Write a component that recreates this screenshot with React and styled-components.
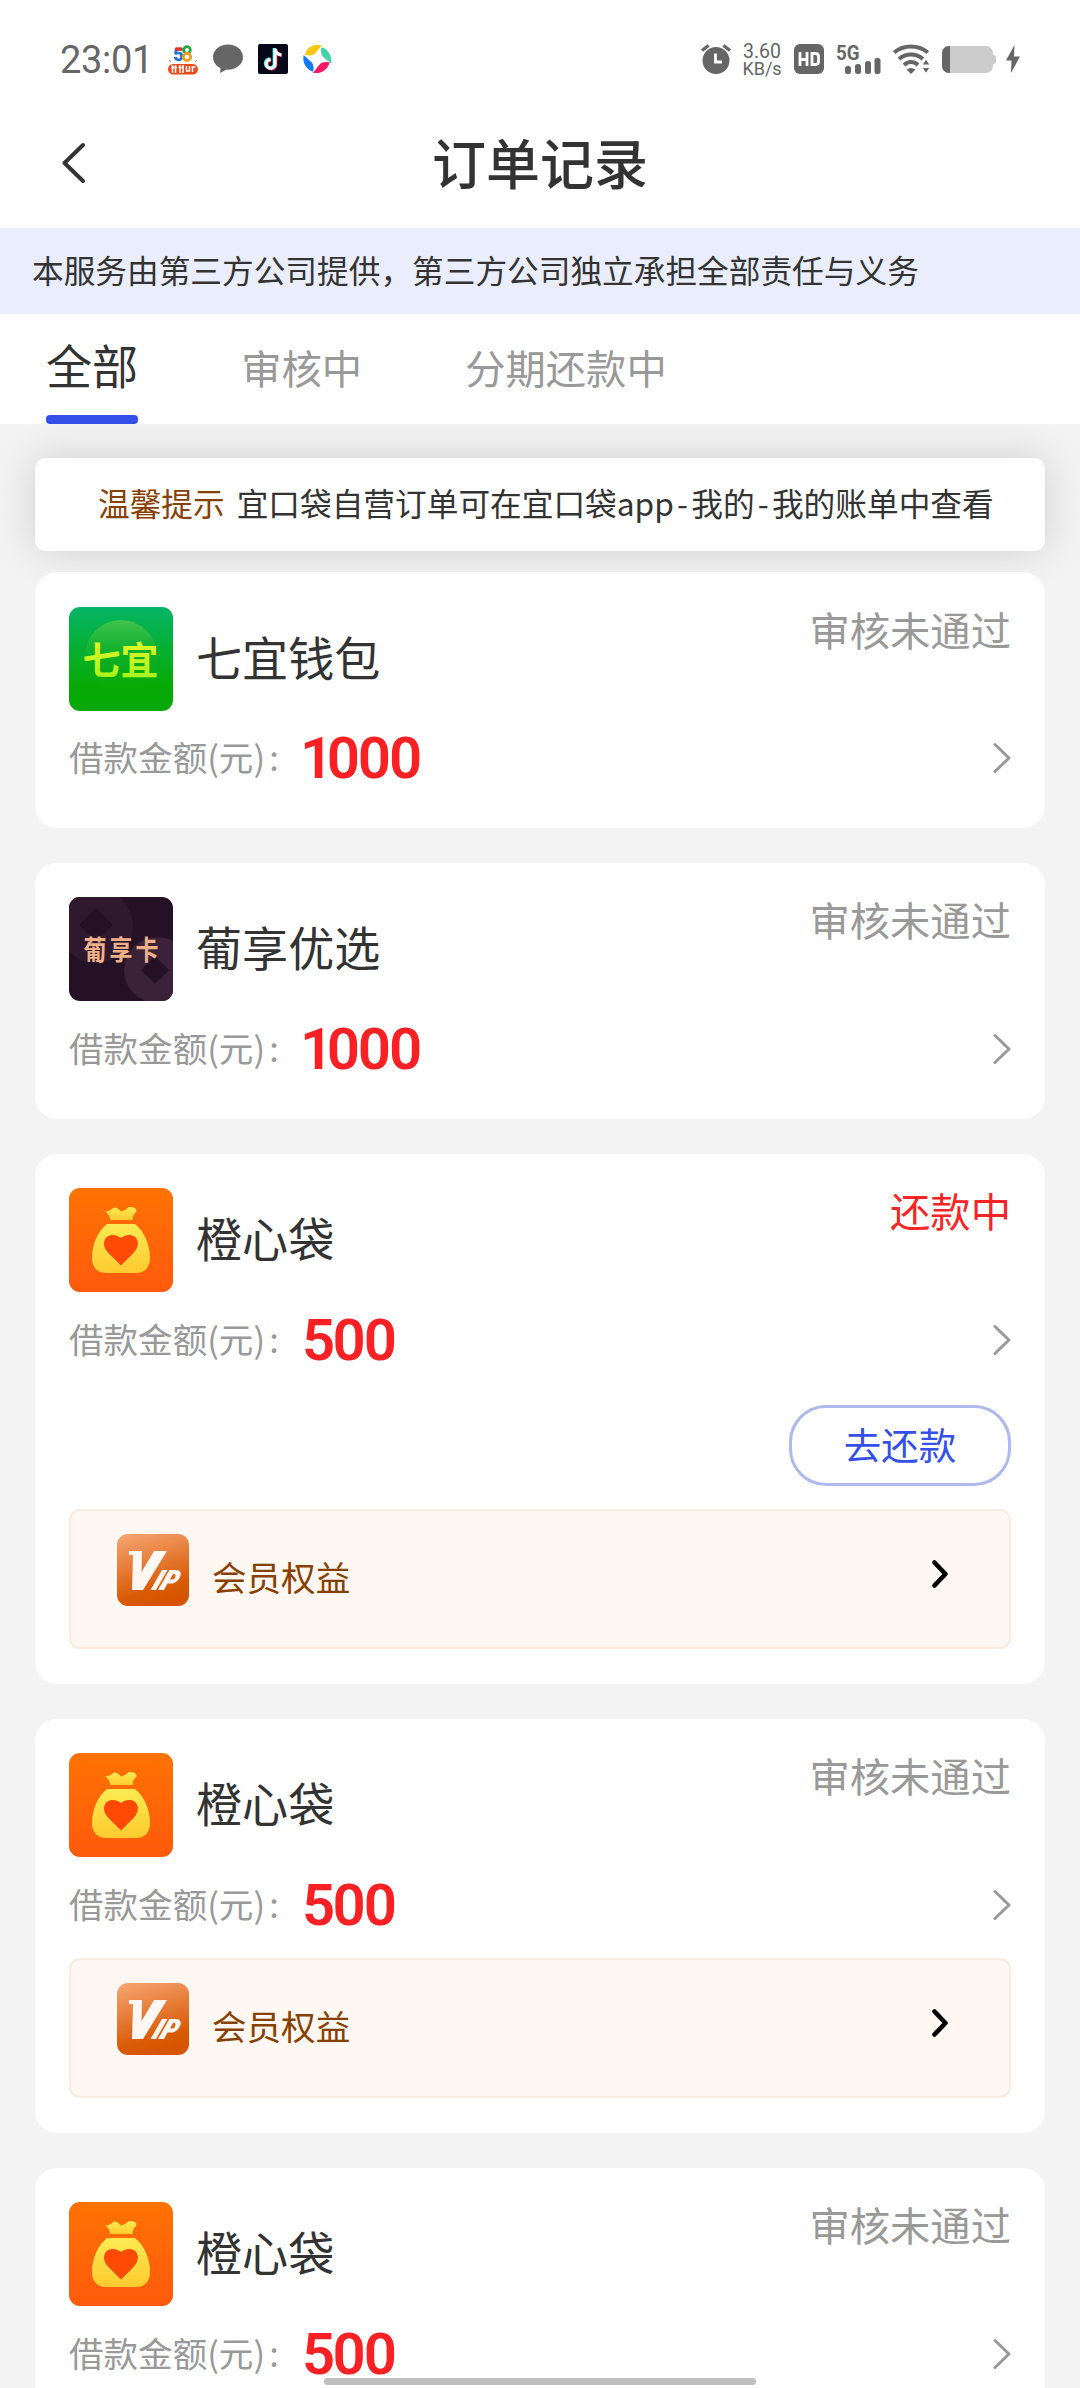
import React from 'react';
import styled, { createGlobalStyle } from 'styled-components';

const GlobalStyle = createGlobalStyle`
  * {
    box-sizing: border-box;
  }

  body {
    margin: 0;
    background: #f3f3f3;
    font-family: 'Noto Sans CJK SC', sans-serif;
    color: #333;
  }
`;

const Page = styled.div`
  position: relative;
  width: 1080px;
  height: 2388px;
  overflow: hidden;
  background: #f3f3f3;
`;

const StatusBar = styled.div`
  display: flex;
  justify-content: space-between;
  align-items: center;
  height: 118px;
  padding: 0 60px;
  background: #fff;
  color: #666;

  svg {
    display: block;
    flex: none;
    overflow: visible;
  }
`;

const StatusGroup = styled.div`
  display: flex;
  align-items: center;
  gap: ${props => props.$gap}px;
`;

const Clock = styled.div`
  width: 93px;
  padding-top: 2px;
  font: 400 38px/44px Roboto, sans-serif;
  letter-spacing: -0.3px;
  white-space: nowrap;
`;

const Speed = styled.div`
  display: flex;
  flex-direction: column;
  align-items: center;
  width: 38px;
  margin: 2px 1px 0 0;
  font: 400 18px/17.5px Roboto, sans-serif;

  span:first-child {
    font-size: 19.5px;
  }
`;

const NavBar = styled.div`
  display: grid;
  grid-template-columns: 1fr auto 1fr;
  align-items: center;
  height: 110px;
  padding: 0 56px 20px;
  background: #fff;
`;

const Title = styled.h1`
  margin: 0;
  padding-bottom: 2px;
  font-size: 54px;
  font-weight: 500;
  line-height: 80px;
`;

const Disclaimer = styled.div`
  height: 86px;
  padding-left: 32px;
  background: #eaedfc;
  font-size: 31.68px;
  line-height: 83px;
  white-space: nowrap;
`;

const Tabs = styled.div`
  display: flex;
  gap: 103px;
  height: 110px;
  padding-left: 46px;
  background: #fff;
`;

const Tab = styled.div`
  display: flex;
  flex-direction: column;
  justify-content: space-between;
  font-size: ${props => (props.$active ? 46.08 : 40.32)}px;
  line-height: ${props => (props.$active ? 101 : 106)}px;
  color: ${props => (props.$active ? '#333' : '#999')};

  &::after {
    content: '';
    display: ${props => (props.$active ? 'block' : 'none')};
    height: 9px;
    margin-top: -7px;
    border-radius: 4px;
    background: #3450e8;
  }
`;

const Tip = styled.div`
  display: flex;
  gap: 12px;
  height: 93px;
  margin: 34px 35px 21px;
  padding-left: 63px;
  border-radius: 11px;
  background: #fff;
  box-shadow: 0 0 42px rgba(0, 0, 0, 0.15);
  font-size: 31.68px;
  line-height: 88px;
  white-space: nowrap;
`;

const TipLabel = styled.span`
  color: #864000;
`;

const Dash = styled.span`
  padding: 0 3.2px;
`;

const List = styled.div`
  position: relative;
  display: flex;
  flex-direction: column;
  gap: 34.7px;
  padding: 0 35px;
`;

const Card = styled.div`
  padding: 34.56px 34px;
  border-radius: 22px;
  background: #fff;
`;

const CardHead = styled.div`
  display: flex;
  height: 104px;
`;

const Name = styled.div`
  flex: 1;
  margin-left: 23px;
  font-size: 46.08px;
  line-height: 98px;
`;

const Status = styled.div`
  font-size: 40.32px;
  line-height: 44px;
  color: ${props => (props.$active ? '#f92424' : '#999')};
`;

const AmountRow = styled.div`
  display: flex;
  align-items: center;
  height: 71px;
  margin-top: 12px;
`;

const AmountLabel = styled.div`
  width: 233px;
  padding-bottom: 4px;
  font-size: 34.56px;
  line-height: 62px;
  word-spacing: -3.5px;
  color: #999;
  white-space: nowrap;
`;

const Amount = styled.div`
  flex: 1;
  font: 600 58px/66px Roboto, sans-serif;
  font-feature-settings: 'pnum';
  letter-spacing: -3.1px;
  color: #fb2024;
`;

const RepayButton = styled.button`
  display: block;
  width: 222px;
  height: 81px;
  margin: 30px 0 23.2px auto;
  padding: 0 0 3px;
  border: 3px solid #afb9ee;
  border-radius: 37px;
  background: #fff;
  font-family: inherit;
  font-size: 37.44px;
  line-height: 72px;
  color: #3450e8;
`;

const VipBox = styled.div`
  display: flex;
  align-items: flex-start;
  height: 140px;
  margin-top: 18.2px;
  padding: 23px 60px 0 46px;
  border: 2px solid #f8ebe0;
  border-radius: 11px;
  background: #fff7f1;

  svg:last-child {
    margin-top: 25px;
  }
`;

const VipText = styled.div`
  flex: 1;
  margin-left: 23px;
  font-size: 34.56px;
  line-height: 84px;
  color: #864000;
`;

const HomeIndicator = styled.div`
  position: absolute;
  left: 324px;
  bottom: 3px;
  width: 432px;
  height: 7px;
  border-radius: 4px;
  background: #bfbfbf;
`;

const SvgText = styled.text`
  font-family: ${props => props.$font || "'Noto Sans CJK SC'"}, sans-serif;
`;

const City58Icon = () => (
  <svg width="30" height="31" viewBox="0 0 30 31">
    <SvgText $font="Roboto" x="5" y="17" fontSize="19" fontWeight="900" fill="#1976d2">5</SvgText>
    <path d="M7.500 5h6.500" stroke="#e8332a" strokeWidth="3.4" />
    <circle cx="19" cy="6" r="3.3" fill="none" stroke="#22a838" strokeWidth="2.8" />
    <circle cx="19" cy="13" r="3.7" fill="none" stroke="#f79a1c" strokeWidth="2.8" />
    <path d="M1 16l2 2M29 16l-2 2" stroke="#999" strokeWidth="1" />
    <rect x="0" y="20" width="30" height="10.500" rx="5.2" fill="#ea4a1b" />
    <path d="M3 23.500h6M4.500 21v8M7.500 21v8M10.500 23.500h5.500M12 21v8M15 21v8M18.500 22v5h3v-5M24.500 23v5M23.500 23h4" stroke="#fff" strokeWidth="1.5" fill="none" />
  </svg>
);

const BubbleIcon = () => (
  <svg width="30" height="30" viewBox="0 0 30 30">
    <path d="M15 0.5C6.700.5 0 6 0 13.200c0 4.700 3 8.600 7.500 10.900L7.200 29l6.300-3.400c9 .6 16.500-5 16.500-12.400C30 6 23.300.5 15 .5z" fill="#666" />
  </svg>
);

const TikTokIcon = () => (
  <svg width="30" height="30" viewBox="0 0 30 30">
    <rect width="30" height="30" rx="2" fill="#07071a" />
    <g fill="none" strokeWidth="3.2">
      <path d="M16.200 4v15.500a4.400 4.400 0 1 1-4.400-4.600M16.200 4c.3 4 3 6 6.300 6.300" stroke="#25f0ea" />
      <path d="M17.800 5.200v15.500a4.400 4.400 0 1 1-4.400-4.600M17.800 5.200c.3 4 3 6 6.300 6.300" stroke="#fb2c56" />
      <path d="M17 4.600v15.500a4.400 4.400 0 1 1-4.400-4.600M17 4.600c.3 4 3 6 6.300 6.300" stroke="#fff" />
    </g>
  </svg>
);

const PinwheelIcon = () => (
  <svg width="29" height="30" viewBox="0 0 29 30">
    <path d="M2 10.800C3.500 4 10.500-.8 18.800 1.400L12 9.500c-2.200 2-6 2.500-10 1.300z" fill="#fbc60c" />
    <path d="M18.200 3.200c6.500 1.500 11.300 8.500 10 16.300l-8-6.500c-2-2.300-2.700-6-2-9.800z" fill="#43d3a5" />
    <path d="M10 28.800c8.300 1.600 14.800-3.300 16.600-10.300-4-.9-7.800-.2-10 1.900z" fill="#fb1564" />
    <path d="M.6 11c-1.500 8.300 3 14.800 9.500 16.800 1-3.500.4-7-1.300-9.200z" fill="#1479ff" />
  </svg>
);

const AlarmIcon = () => (
  <svg width="30" height="30" viewBox="0 0 30 30">
    <circle cx="15" cy="16.500" r="13.500" fill="#666" />
    <path d="M1 6.500l6.500-5M29 6.500l-6.500-5" stroke="#666" strokeWidth="3.400" />
    <path d="M14.500 9.500v8.500h6.500" fill="none" stroke="#fff" strokeWidth="2.800" />
  </svg>
);

const HdIcon = () => (
  <svg width="30" height="30" viewBox="0 0 30 30">
    <rect width="30" height="30" rx="6" fill="#666" />
    <path d="M6 8v14M13 8v14M6 15.500h7M18 9.500h3.500q3 0 3 3v5q0 3-3 3H18z" fill="none" stroke="#fff" strokeWidth="2.800" />
  </svg>
);

const SignalIcon = () => (
  <svg width="45" height="31" viewBox="0 0 45 31">
    <SvgText $font="Roboto" x="0" y="15.500" fontSize="20" fontWeight="700" fill="#666" textLength="23.500" lengthAdjust="spacingAndGlyphs">5G</SvgText>
    <g fill="#666">
      <rect x="9" y="22" width="6" height="8" rx="2.500" />
      <rect x="19" y="20" width="6" height="10" rx="2.500" />
      <rect x="29" y="17" width="6" height="13" rx="2.500" />
      <rect x="38.500" y="14" width="6" height="16" rx="2.500" />
    </g>
  </svg>
);

const WifiIcon = () => (
  <svg width="37" height="30" viewBox="0 0 37 30">
    <g fill="none" stroke="#666" strokeWidth="4">
      <path d="M1.200 8.500c9.500-8 24-8 33.600 0" />
      <path d="M6 15c7-6 17-6 24 0" />
      <path d="M11 21c4-4 10-4 14 0" />
    </g>
    <path d="M13.500 25.500q4.500-3 9 0L18 30z" fill="#666" />
    <path d="M33 15l4 6h-8zM33 29.500l4-6h-8z" fill="#666" stroke="#fff" strokeWidth="1" />
  </svg>
);

const BatteryIcon = () => (
  <svg width="54" height="27" viewBox="0 0 54 27">
    <path d="M50 9h1.500q2.500 0 2.500 2.500v4q0 2.500-2.500 2.500H50z" fill="#ccc" />
    <rect width="51" height="27" rx="7" fill="#ccc" />
    <path d="M8 0H7a7 7 0 0 0-7 7v13a7 7 0 0 0 7 7h1z" fill="#666" />
  </svg>
);

const BoltIcon = () => (
  <svg width="12" height="28" viewBox="2 0 12 28">
    <path d="M8.500 0L0 15.500h5.500L5 28l9-16.500H8z" fill="#666" />
  </svg>
);

const BackIcon = () => (
  <svg width="36" height="44" viewBox="0 0 36 44">
    <path d="M27 4L8.500 22 27 40" fill="none" stroke="#333" strokeWidth="4" strokeLinecap="round" strokeLinejoin="round" />
  </svg>
);

const ChevronIcon = () => (
  <svg width="18" height="32" viewBox="0 0 18 32">
    <path d="M2 2.500L16 16 2 29.500" fill="none" stroke="#999" strokeWidth="3" strokeLinecap="round" strokeLinejoin="round" />
  </svg>
);

const VipChevronIcon = () => (
  <svg width="18" height="30" viewBox="0 0 18 30">
    <path d="M3.500 3.500L14.500 15 3.500 26.500" fill="none" stroke="#000" strokeWidth="4.600" strokeLinecap="round" strokeLinejoin="round" />
  </svg>
);

const WalletLogo = () => (
  <svg width="104" height="104" viewBox="0 0 104 104">
    <defs>
      <linearGradient id="walletBg" x1="0" y1="0" x2="0" y2="1">
        <stop offset="0" stopColor="#05b566" />
        <stop offset="0.75" stopColor="#06aa06" />
        <stop offset="1" stopColor="#08a808" />
      </linearGradient>
      <linearGradient id="walletBall" x1="0" y1="0" x2="0" y2="1">
        <stop offset="0" stopColor="#8fd84a" stopOpacity="0.45" />
        <stop offset="0.6" stopColor="#1fb010" stopOpacity="0.15" />
        <stop offset="1" stopColor="#1fb010" stopOpacity="0" />
      </linearGradient>
      <linearGradient id="walletText" x1="0" y1="0" x2="0" y2="1">
        <stop offset="0" stopColor="#f3fa2a" />
        <stop offset="1" stopColor="#9df21c" />
      </linearGradient>
    </defs>
    <rect width="104" height="104" rx="11" fill="url(#walletBg)" />
    <circle cx="52" cy="49" r="36" fill="url(#walletBall)" />
    <SvgText x="13.500" y="67" fontSize="38" fontWeight="700" fill="url(#walletText)">七宜</SvgText>
  </svg>
);

const GrapeLogo = () => (
  <svg width="104" height="104" viewBox="0 0 104 104">
    <defs>
      <clipPath id="grapeClip"><rect width="104" height="104" rx="11" /></clipPath>
    </defs>
    <g clipPath="url(#grapeClip)">
      <rect width="104" height="104" fill="#241126" />
      <circle cx="27" cy="29" r="37" fill="#2e192f" />
      <circle cx="88" cy="73" r="33" fill="#3a2238" />
      <path d="M27 11l17 17-17 17-17-17zM86 59l14 14-14 14-14-14z" fill="#241126" />
    </g>
    <SvgText transform="translate(14.500 62.500) scale(1 1.2)" fontSize="23" fontWeight="700" fill="#eeb088" letterSpacing="3">葡享卡</SvgText>
  </svg>
);

const BagLogo = () => (
  <svg width="104" height="104" viewBox="0 0 104 104">
    <defs>
      <linearGradient id="bagBg" x1="0" y1="0" x2="0" y2="1">
        <stop offset="0" stopColor="#ff7203" />
        <stop offset="1" stopColor="#ff5a0c" />
      </linearGradient>
      <linearGradient id="bagFill" x1="0" y1="0" x2="0" y2="1">
        <stop offset="0" stopColor="#fdea52" />
        <stop offset="1" stopColor="#fecb2f" />
      </linearGradient>
    </defs>
    <rect width="104" height="104" rx="11" fill="url(#bagBg)" />
    <path d="M36 23q4 1 9-3.500 3-.5 7 4 4-.5 8-4.500c4-.5 8 1 7.500 4.500-3 3-4 5-3.500 8.500H41c0-4-2-6-5-9z" fill="url(#bagFill)" />
    <path d="M38 36h28c9 7 15 20 15 34 0 9-5 15-14 15H37c-9 0-14-6-14-15 0-14 6-27 15-34z" fill="url(#bagFill)" />
    <path d="M52 77.500L39.500 65C31 56 36 47 43.500 47c4 0 6.500 1.500 8.500 3 2-1.500 4.500-3 8.500-3C68 47 73 56 64.500 65z" fill="#ff4a06" />
  </svg>
);

const VipIcon = () => (
  <svg width="72" height="72" viewBox="0 0 72 72">
    <defs>
      <linearGradient id="vipBg" x1="0.2" y1="0" x2="0.5" y2="1">
        <stop offset="0" stopColor="#f5a26e" />
        <stop offset="0.8" stopColor="#d95a06" />
        <stop offset="1" stopColor="#d65400" />
      </linearGradient>
    </defs>
    <rect width="72" height="72" rx="11" fill="url(#vipBg)" />
    <path d="M12 17h13l-.5 21L37 17h13L26 56H15l1-35h-4z" fill="#fff7f1" />
    <path d="M45 36h5.500L39 56h-5.500z" fill="#fff7f1" />
    <path d="M47 56h-6l11.500-20H59c5 0 6 4 3.500 8s-5 5.500-8.500 5.500h-3.500zM56 40l-3 5.500h2.500c2.500 0 4.500-5.500 1.800-5.500z" fill="#fff7f1" fillRule="evenodd" />
  </svg>
);

const logos = {
  wallet: WalletLogo,
  grape: GrapeLogo,
  bag: BagLogo
};

const tabs = ['全部', '审核中', '分期还款中'];

const orders = [
  {id: 1, logo: 'wallet', name: '七宜钱包', status: '审核未通过', amount: 1000},
  {id: 2, logo: 'grape', name: '葡享优选', status: '审核未通过', amount: 1000},
  {id: 3, logo: 'bag', name: '橙心袋', status: '还款中', amount: 500, repaying: true, vip: true},
  {id: 4, logo: 'bag', name: '橙心袋', status: '审核未通过', amount: 500, vip: true},
  {id: 5, logo: 'bag', name: '橙心袋', status: '审核未通过', amount: 500, vip: true}
];

function Order({order}) {
  const Logo = logos[order.logo];

  return (
    <Card>
      <CardHead>
        <Logo />
        <Name>{order.name}</Name>
        <Status $active={order.repaying}>{order.status}</Status>
      </CardHead>
      <AmountRow>
        <AmountLabel>借款金额(元) :</AmountLabel>
        <Amount>{order.amount}</Amount>
        <ChevronIcon />
      </AmountRow>
      {order.repaying && <RepayButton>去还款</RepayButton>}
      {order.vip && (
        <VipBox>
          <VipIcon />
          <VipText>会员权益</VipText>
          <VipChevronIcon />
        </VipBox>
      )}
    </Card>
  );
}

function App() {
  return (
    <Page>
      <GlobalStyle />
      <StatusBar>
        <StatusGroup $gap={15}>
          <Clock>23:01</Clock>
          <City58Icon />
          <BubbleIcon />
          <TikTokIcon />
          <PinwheelIcon />
        </StatusGroup>
        <StatusGroup $gap={12}>
          <AlarmIcon />
          <Speed>
            <span>3.60</span>
            <span>KB/s</span>
          </Speed>
          <HdIcon />
          <SignalIcon />
          <WifiIcon />
          <BatteryIcon />
          <BoltIcon />
        </StatusGroup>
      </StatusBar>
      <NavBar>
        <BackIcon />
        <Title>订单记录</Title>
      </NavBar>
      <Disclaimer>本服务由第三方公司提供，第三方公司独立承担全部责任与义务</Disclaimer>
      <Tabs>
        {tabs.map((tab, i) => (
          <Tab key={tab} $active={i === 0}>{tab}</Tab>
        ))}
      </Tabs>
      <Tip>
        <TipLabel>温馨提示</TipLabel>
        <span>宜口袋自营订单可在宜口袋app<Dash>-</Dash>我的<Dash>-</Dash>我的账单中查看</span>
      </Tip>
      <List>
        {orders.map(order => (
          <Order key={order.id} order={order} />
        ))}
      </List>
      <HomeIndicator />
    </Page>
  );
}

export default App;
